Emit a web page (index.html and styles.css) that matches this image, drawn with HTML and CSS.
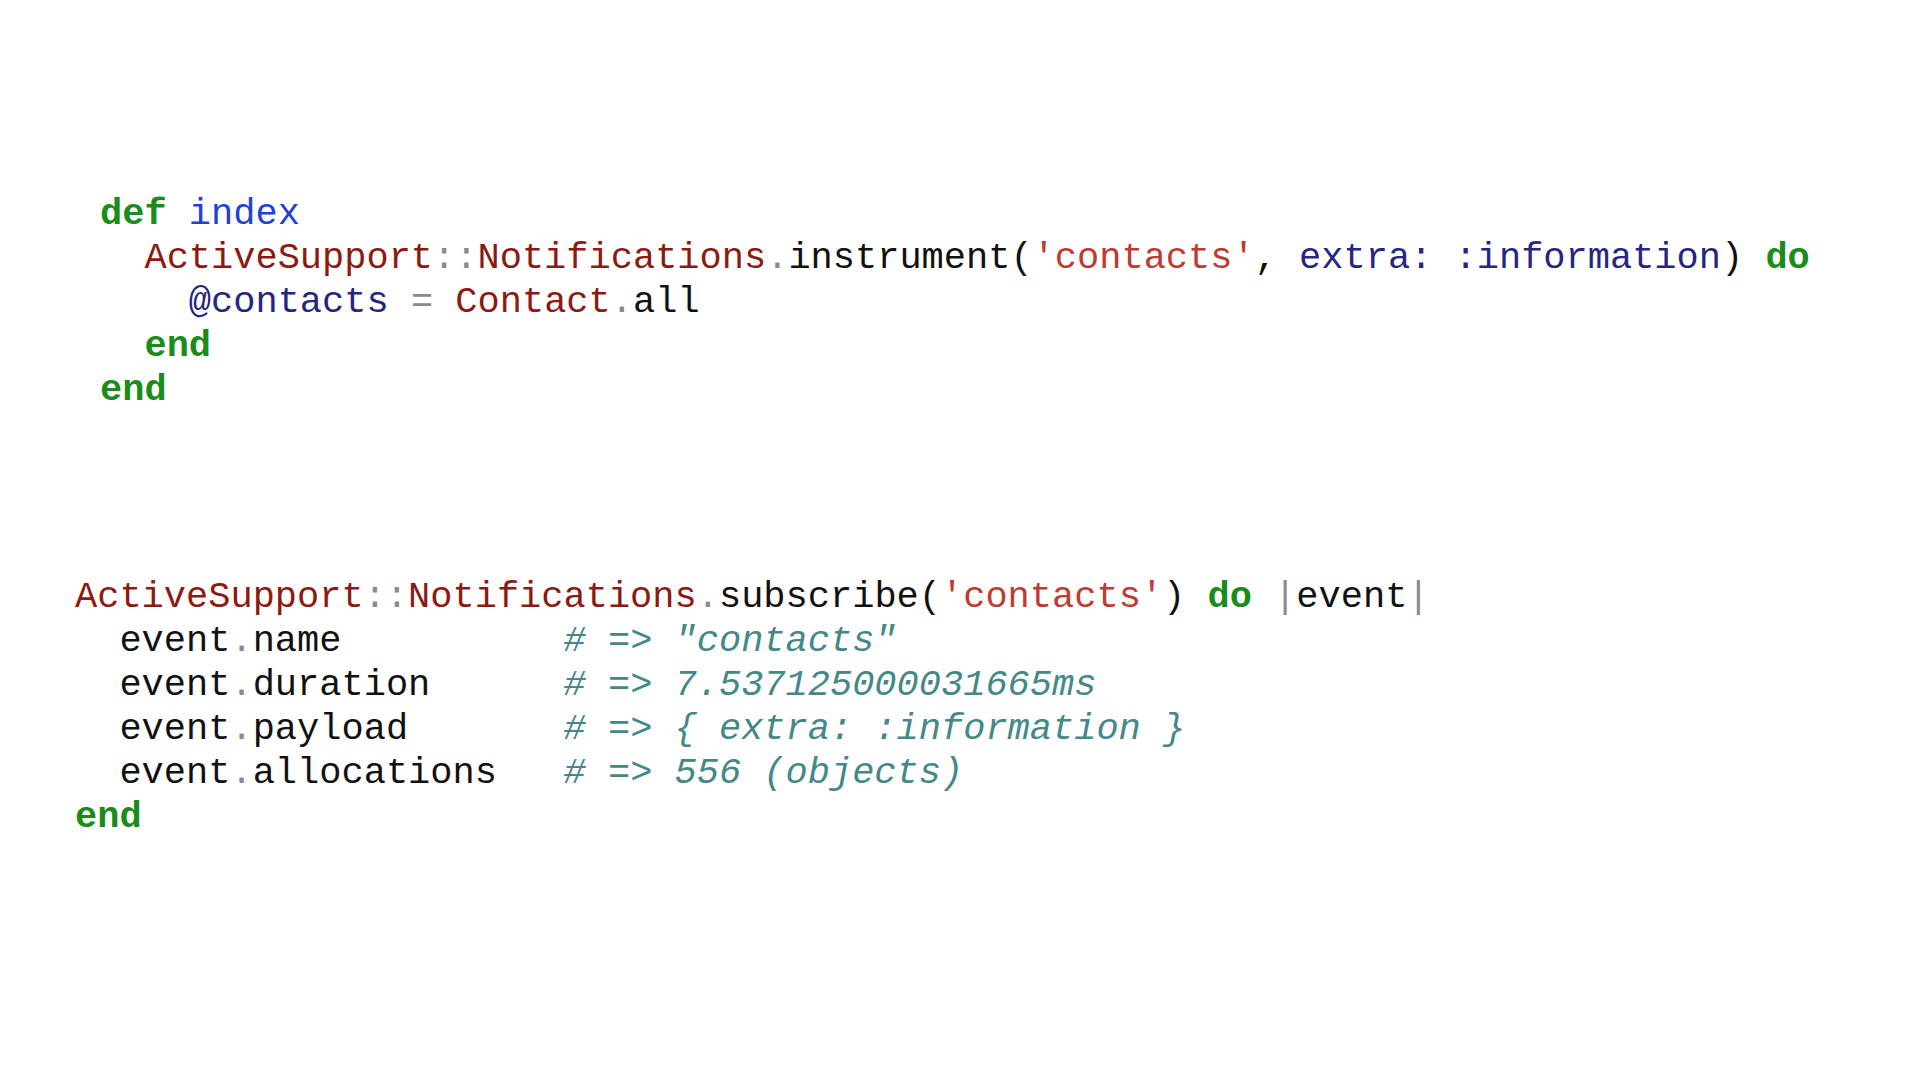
FILE: index.html
```html
<!DOCTYPE html>
<html>
<head>
<meta charset="utf-8">
<link rel="stylesheet" href="styles.css">
</head>
<body>
<main class="slide">
<pre class="code code-a"><span class="kw">def</span> <span class="fn">index</span>
  <span class="cls">ActiveSupport</span><span class="op">::</span><span class="cls">Notifications</span><span class="op">.</span>instrument(<span class="str">'contacts'</span>, <span class="sym">extra: :information</span>) <span class="kw">do</span>
    <span class="sym">@contacts</span> <span class="op">=</span> <span class="cls">Contact</span><span class="op">.</span>all
  <span class="kw">end</span>
<span class="kw">end</span></pre>
<pre class="code code-b"><span class="cls">ActiveSupport</span><span class="op">::</span><span class="cls">Notifications</span><span class="op">.</span>subscribe(<span class="str">'contacts'</span>) <span class="kw">do</span> <span class="bar">|</span>event<span class="bar">|</span>
  event<span class="op">.</span>name          <span class="cmt"># =&gt; "contacts"</span>
  event<span class="op">.</span>duration      <span class="cmt"># =&gt; 7.537125000031665ms</span>
  event<span class="op">.</span>payload       <span class="cmt"># =&gt; { extra: :information }</span>
  event<span class="op">.</span>allocations   <span class="cmt"># =&gt; 556 (objects)</span>
<span class="kw">end</span></pre>
</main>
</body>
</html>
```
FILE: styles.css
```css
html, body {
  margin: 0;
  padding: 0;
  background: #ffffff;
}
.slide {
  width: 1920px;
  height: 1080px;
  display: flex;
  flex-direction: column;
}
.code {
  margin: 0;
  font-family: "Liberation Mono", "Courier New", monospace;
  font-size: 37px;
  line-height: 44px;
  color: #111111;
  white-space: pre;
}
.code-a {
  margin-top: 192px;
  margin-left: 100px;
}
.code-b {
  margin-top: 163px;
  margin-left: 75px;
}
.kw { color: #1a8c1a; font-weight: bold; }
.fn { color: #2141d6; }
.cls { color: #8c1a12; }
.op { color: #8a8a8a; }
.str { color: #bf3a30; }
.sym { color: #26267f; }
.cmt { color: #448888; font-style: italic; }
.bar { color: #8a8a8a; }
```
